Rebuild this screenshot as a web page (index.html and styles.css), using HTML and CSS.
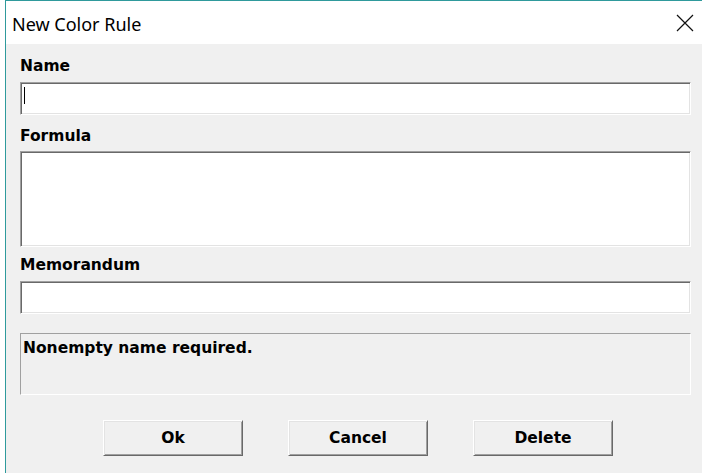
FILE: index.html
```html
<!DOCTYPE html>
<html>
<head>
<meta charset="utf-8">
<title>New Color Rule</title>
<link rel="stylesheet" href="styles.css">
</head>
<body>
<div class="window">
  <div class="titlebar">
    <span class="title">New Color Rule</span>
    <span class="close">
      <svg width="18" height="18" viewBox="0 0 18 18"><path d="M1 1 L17 17 M17 1 L1 17" stroke="#111" stroke-width="1.2" fill="none"/></svg>
    </span>
  </div>
  <div class="client">
    <div class="field field-name">
      <div class="label">Name</div>
      <div class="edit edit-single"><span class="caret"></span></div>
    </div>
    <div class="field field-formula">
      <div class="label">Formula</div>
      <div class="edit edit-multi"></div>
    </div>
    <div class="field field-memo">
      <div class="label">Memorandum</div>
      <div class="edit edit-single"></div>
    </div>
    <div class="status">Nonempty name required.</div>
    <div class="buttons">
      <button class="btn">Ok</button>
      <button class="btn">Cancel</button>
      <button class="btn">Delete</button>
    </div>
  </div>
</div>
</body>
</html>
```
FILE: styles.css
```css
html, body {
  margin: 0;
  padding: 0;
  background: #ffffff;
  overflow: hidden;
}

.window {
  margin-left: 5px;
  width: 697px;
  height: 473px;
  border-top: 1px solid #2f9a9c;
  border-left: 1px solid #2f9a9c;
  display: flex;
  flex-direction: column;
  box-sizing: border-box;
}

.titlebar {
  height: 43px;
  flex: none;
  background: #ffffff;
  display: flex;
  align-items: center;
  justify-content: space-between;
  padding-left: 6px;
  padding-right: 8px;
}

.title {
  font-family: "Noto Sans", "Open Sans", sans-serif;
  font-size: 18px;
  color: #000;
  position: relative;
  top: 1px;
}

.close {
  display: flex;
  width: 18px;
  height: 18px;
}

.client {
  flex: 1;
  background: #f0f0f0;
  padding: 10px 0 0 14px;
  display: flex;
  flex-direction: column;
}

.label,
.status,
.btn {
  font-family: "DejaVu Sans", "Liberation Sans", sans-serif;
  font-weight: bold;
  font-size: 15.5px;
  color: #000;
}

.label {
  height: 24px;
  line-height: 24px;
}

.field-name .label { margin-bottom: 4px; }
.field-formula { margin-top: 9px; }
.field-formula .label { margin-bottom: 3px; }
.field-memo { margin-top: 6px; }
.field-memo .label { margin-bottom: 4px; }

.edit {
  width: 671px;
  box-sizing: border-box;
  background: #ffffff;
  border-style: solid;
  border-width: 1px;
  border-color: #a0a0a0 #ffffff #ffffff #a0a0a0;
  box-shadow: inset 1px 1px 0 #696969, inset -1px -1px 0 #e3e3e3;
  position: relative;
}

.edit-single { height: 33px; }
.edit-multi { height: 96px; }

.caret {
  position: absolute;
  left: 3px;
  top: 4px;
  width: 1px;
  height: 17px;
  background: #000;
}

.status {
  margin-top: 19px;
  width: 671px;
  height: 62px;
  box-sizing: border-box;
  border-style: solid;
  border-width: 1px;
  border-color: #a0a0a0 #ffffff #ffffff #a0a0a0;
  padding: 4px 2px;
  line-height: 20px;
}

.buttons {
  margin-top: 25px;
  margin-left: 83px;
  display: flex;
  gap: 45px;
}

.btn {
  width: 140px;
  height: 36px;
  padding: 0;
  background: #f0f0f0;
  border-style: solid;
  border-width: 1px;
  border-color: #ffffff #696969 #696969 #ffffff;
  box-shadow: inset 1px 1px 0 #e3e3e3, inset -1px -1px 0 #a0a0a0;
}
```
